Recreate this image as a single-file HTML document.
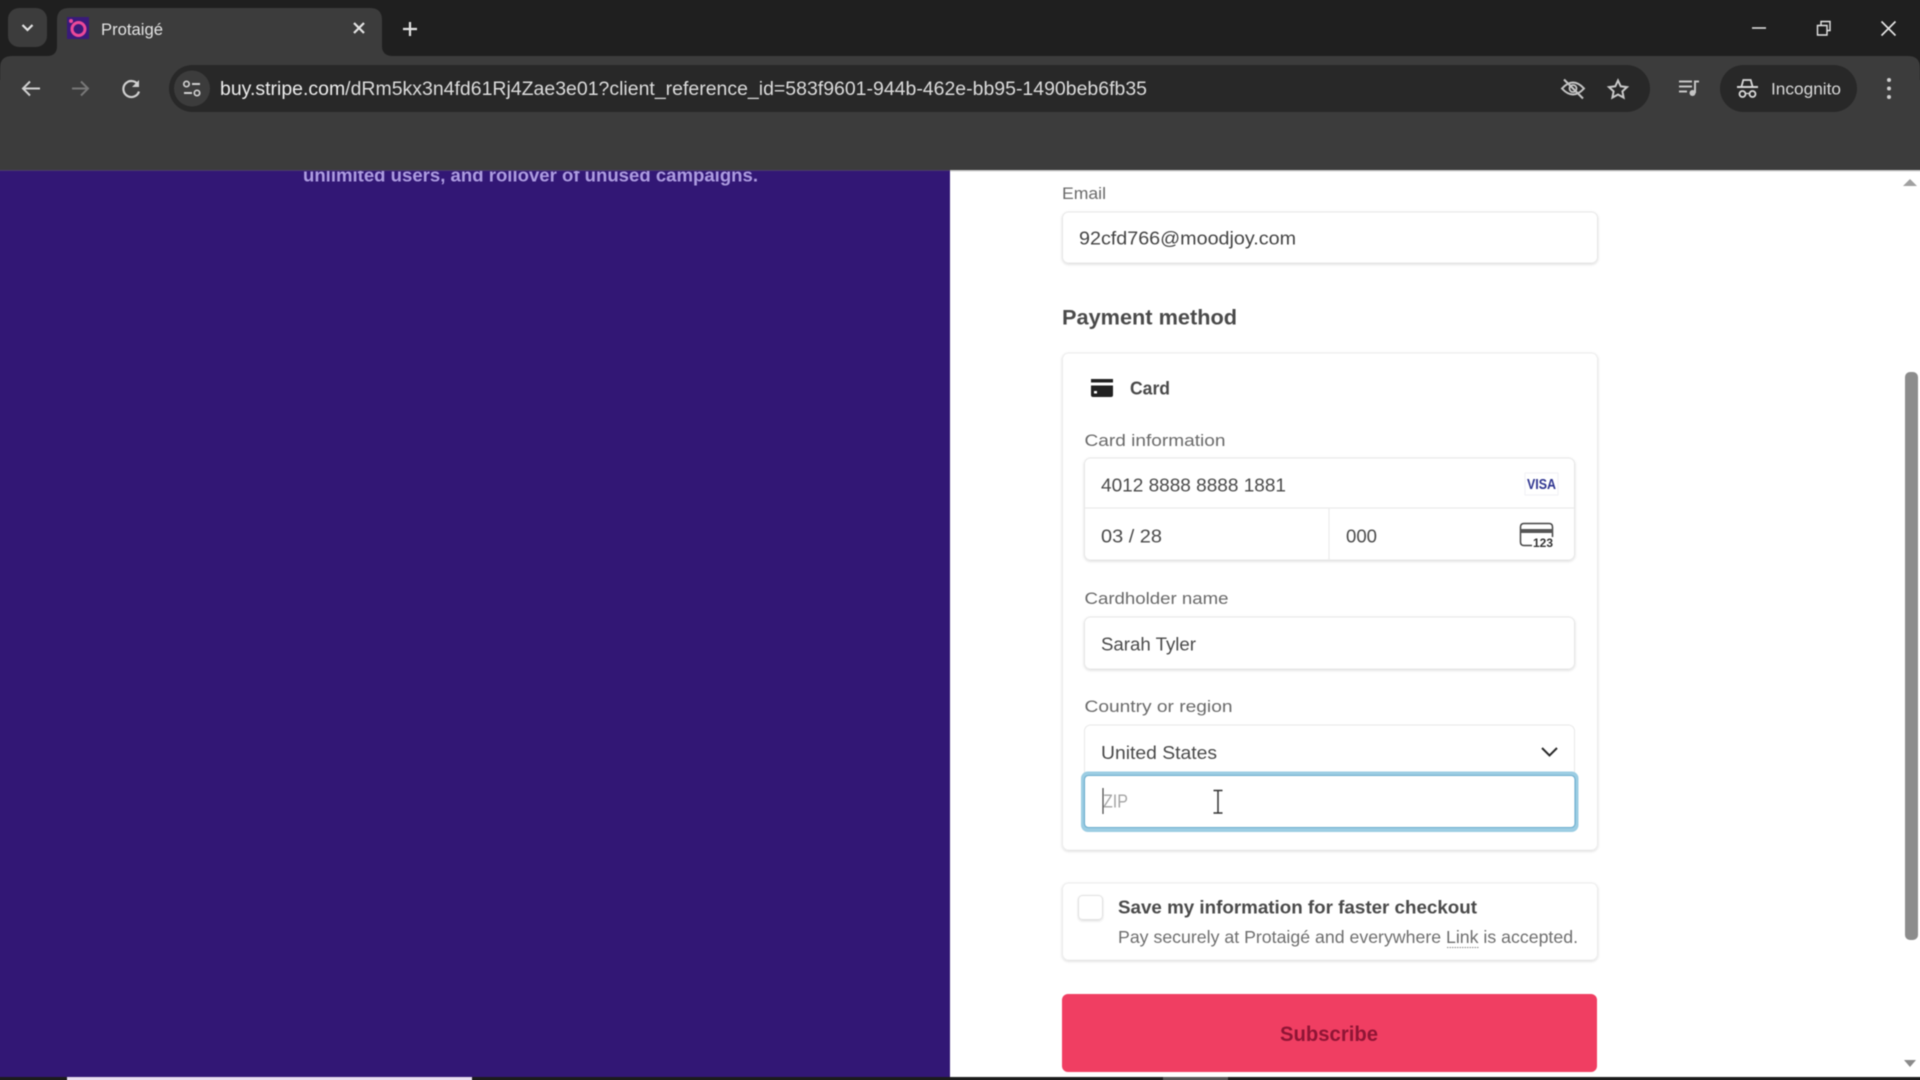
<!DOCTYPE html>
<html lang="en"><head><meta charset="utf-8"><title>Protaigé</title>
<style>
html,body{margin:0;padding:0;width:1920px;height:1080px;overflow:hidden;background:#1f1f1f}
#w{position:relative;width:1920px;height:1080px;overflow:hidden;contain:strict}
svg{display:block;position:absolute;left:-10px;top:-10px;filter:blur(.45px)}
text{font-family:"Liberation Sans",sans-serif}
</style></head><body><div id="w">
<svg width="1940" height="1100" viewBox="-10 -10 1940 1100" xmlns="http://www.w3.org/2000/svg">
<defs>
<clipPath id="pg"><rect x="0" y="170" width="1920" height="910"/></clipPath>
<filter id="sh" x="-5%" y="-20%" width="110%" height="140%"><feDropShadow dx="0" dy="1" stdDeviation="1.2" flood-color="#000" flood-opacity=".14"/></filter>
</defs>
<!-- page -->
<rect x="-10" y="-10" width="1940" height="1100" fill="#fff"/>
<rect x="-10" y="170" width="960" height="920" fill="#321775"/>
<g clip-path="url(#pg)"><text x="303" y="181.500" font-size="18.500" font-weight="700" fill="#ad9ce0" textLength="455" lengthAdjust="spacingAndGlyphs">unlimited users, and rollover of unused campaigns.</text></g>

<!-- browser chrome -->
<rect x="-10" y="-10" width="1940" height="90" fill="#1f1f1f"/>
<path d="M-10 170V80H0V68Q0 56 12 56H1908Q1920 56 1920 68V80H1930V170Z" fill="#3c3c3c"/>
<rect x="-10" y="170" width="960" height="1" fill="#4a3a6e"/>
<rect x="950" y="170" width="980" height="1.500" fill="#cfcfcf"/>
<path d="M47 56Q57 56 57 46V20Q57 8 69 8H370Q382 8 382 20V46Q382 56 393 56Z" fill="#3c3c3c"/>
<rect x="8" y="8" width="39" height="39" rx="11" fill="#3c3c3c"/>
<path d="M22.500 25l5 5 5-5" fill="none" stroke="#e3e3e3" stroke-width="2.200"/>
<rect x="67" y="17" width="22" height="22" fill="#3a1a7a"/>
<circle cx="78.500" cy="29" r="6.500" fill="none" stroke="#ec4899" stroke-width="3"/>
<circle cx="71" cy="21" r="2" fill="#ec4899"/>
<text x="101" y="35" font-size="16.500" fill="#e3e3e3" textLength="62" lengthAdjust="spacingAndGlyphs">Protaigé</text>
<path d="M354 23l10 10M364 23l-10 10" stroke="#e3e3e3" stroke-width="2.200"/>
<path d="M410 22v14M403 29h14" stroke="#e3e3e3" stroke-width="2.200"/>
<path d="M1752 28h14" stroke="#e6e6e6" stroke-width="1.500"/>
<path d="M1817.500 25.500h9.500v9.500h-9.500zM1821 25.500v-4h9v9h-3" fill="none" stroke="#e6e6e6" stroke-width="1.400"/>
<path d="M1881.500 21.500l14 14M1895.500 21.500l-14 14" stroke="#e6e6e6" stroke-width="1.600"/>

<!-- toolbar -->
<path d="M40 88.500H23M30 81.500l-7 7 7 7" fill="none" stroke="#cfcfcf" stroke-width="2"/>
<path d="M72 88.500H88M81 81.500l7 7-7 7" fill="none" stroke="#777" stroke-width="2"/>
<path d="M138 84.500A8 8 0 1 0 139 91.500" fill="none" stroke="#cfcfcf" stroke-width="2.200"/>
<path d="M139 80v7h-7z" fill="#cfcfcf"/>
<rect x="169" y="65" width="1481" height="47" rx="23.500" fill="#282828"/>
<circle cx="192" cy="88.500" r="18" fill="#3c3c3c"/>
<circle cx="186.500" cy="84" r="2.700" fill="none" stroke="#cfcfcf" stroke-width="1.700"/>
<path d="M192 84h8M184 93h8" stroke="#cfcfcf" stroke-width="1.900"/>
<circle cx="197" cy="93" r="2.700" fill="none" stroke="#cfcfcf" stroke-width="1.700"/>
<text x="220" y="95" font-size="19" fill="#dcdcdc" textLength="927" lengthAdjust="spacingAndGlyphs"><tspan fill="#eeeeee">buy.stripe.com</tspan>/dRm5kx3n4fd61Rj4Zae3e01?client_reference_id=583f9601-944b-462e-bb95-1490beb6fb35</text>
<path d="M1562 88.500Q1573 76.500 1584 88.500Q1573 100.500 1562 88.500Z" fill="none" stroke="#c4c4c4" stroke-width="2"/>
<circle cx="1573" cy="88.500" r="3.500" fill="none" stroke="#c4c4c4" stroke-width="1.800"/>
<path d="M1564 79.500l19 19" stroke="#c4c4c4" stroke-width="2"/>
<path d="M1618 80.500l2.700 5.800 6.300.8-4.600 4.300 1.200 6.200-5.600-3.100-5.600 3.100 1.200-6.200-4.600-4.300 6.300-.8z" fill="none" stroke="#c8c8c8" stroke-width="2"/>
<path d="M1679 81.500h13M1679 86.500h13M1679 91.500h8" stroke="#c4c4c4" stroke-width="2"/>
<path d="M1695 93V81.500h4" fill="none" stroke="#c4c4c4" stroke-width="2"/>
<circle cx="1692.500" cy="93" r="3" fill="#c4c4c4"/>
<rect x="1720" y="65" width="137" height="47" rx="23.500" fill="#282828"/>
<path d="M1741.500 86.500l1.800-6.500h7.400l1.800 6.500" fill="none" stroke="#d8d8d8" stroke-width="1.800"/>
<path d="M1737 87h21" stroke="#d8d8d8" stroke-width="2"/>
<circle cx="1742.500" cy="94" r="3" fill="none" stroke="#d8d8d8" stroke-width="1.800"/>
<circle cx="1752.500" cy="94" r="3" fill="none" stroke="#d8d8d8" stroke-width="1.800"/>
<path d="M1745.500 93.500h4" stroke="#d8d8d8" stroke-width="1.300"/>
<text x="1771" y="94.500" font-size="17" fill="#d8d8d8" textLength="70" lengthAdjust="spacingAndGlyphs">Incognito</text>
<circle cx="1889" cy="80" r="2" fill="#cfcfcf"/><circle cx="1889" cy="88.500" r="2" fill="#cfcfcf"/><circle cx="1889" cy="97" r="2" fill="#cfcfcf"/>

<!-- email -->
<text x="1062" y="199" font-size="17" fill="#6a6a6a" textLength="44" lengthAdjust="spacingAndGlyphs">Email</text>
<rect x="1062.500" y="212" width="535" height="51" rx="6" fill="#fff" stroke="#e8e8e8" filter="url(#sh)"/>
<text x="1079" y="244.500" font-size="18.500" fill="#444" textLength="217" lengthAdjust="spacingAndGlyphs">92cfd766@moodjoy.com</text>
<text x="1062" y="324.500" font-size="21" font-weight="700" fill="#4a4a4a" textLength="175" lengthAdjust="spacingAndGlyphs">Payment method</text>

<!-- payment panel -->
<rect x="1062.500" y="353" width="535" height="497" rx="6" fill="#fff" stroke="#ececec" filter="url(#sh)"/>
<rect x="1091" y="379" width="22" height="3.500" fill="#222"/>
<path d="M1091 385.500h22v9.500q0 2-2 2h-18q-2 0-2-2z" fill="#222"/>
<rect x="1094" y="391" width="3" height="2.500" fill="#fff"/>
<text x="1130" y="394.500" font-size="18" font-weight="700" fill="#4a4a4a" textLength="40" lengthAdjust="spacingAndGlyphs">Card</text>
<text x="1084.500" y="446" font-size="17" fill="#6a6a6a" textLength="141" lengthAdjust="spacingAndGlyphs">Card information</text>
<rect x="1084.500" y="458" width="490" height="102" rx="6" fill="#fff" stroke="#e8e8e8" filter="url(#sh)"/>
<path d="M1085 508h489M1329 508v52" stroke="#ececec" stroke-width="1.200"/>
<text x="1101" y="491.500" font-size="18" fill="#4a4a4a" textLength="185" lengthAdjust="spacingAndGlyphs">4012 8888 8888 1881</text>
<rect x="1525" y="473" width="33" height="22" fill="none" stroke="#f1f1f5" stroke-width="1"/>
<text x="1527" y="489" font-size="14.500" font-weight="700" fill="#2f3590" textLength="29" lengthAdjust="spacingAndGlyphs">VISA</text>
<text x="1101" y="542.500" font-size="18" fill="#4a4a4a" textLength="61" lengthAdjust="spacingAndGlyphs">03 / 28</text>
<text x="1346" y="542.500" font-size="18" fill="#4a4a4a" textLength="31" lengthAdjust="spacingAndGlyphs">000</text>
<path d="M1532 545.500h-8q-3.500 0-3.500-3.500V527q0-3.500 3.500-3.500h25q3.500 0 3.500 3.500v10" fill="none" stroke="#444" stroke-width="1.500"/>
<rect x="1520.500" y="529" width="32.500" height="4" fill="#555"/>
<text x="1533" y="547" font-size="12" font-weight="700" fill="#333" textLength="20" lengthAdjust="spacingAndGlyphs">123</text>

<text x="1084.500" y="604" font-size="17" fill="#6a6a6a" textLength="144" lengthAdjust="spacingAndGlyphs">Cardholder name</text>
<rect x="1084.500" y="617" width="490" height="52" rx="6" fill="#fff" stroke="#e8e8e8" filter="url(#sh)"/>
<text x="1101" y="650.500" font-size="18" fill="#4a4a4a" textLength="95" lengthAdjust="spacingAndGlyphs">Sarah Tyler</text>

<text x="1084.500" y="712" font-size="17" fill="#6a6a6a" textLength="148" lengthAdjust="spacingAndGlyphs">Country or region</text>
<rect x="1084.500" y="725" width="490" height="60" rx="6" fill="#fff" stroke="#e8e8e8"/>
<text x="1101" y="759" font-size="18" fill="#4a4a4a" textLength="116" lengthAdjust="spacingAndGlyphs">United States</text>
<path d="M1542 748l7.500 7.500 7.500-7.500" fill="none" stroke="#2a2a2a" stroke-width="2"/>
<rect x="1081" y="771.500" width="497.500" height="60.500" rx="7" fill="#9ccde3"/>
<rect x="1084.500" y="775.500" width="490.500" height="52" rx="4" fill="#fff" stroke="#6aaccd" stroke-width="1.100"/>
<path d="M1103 788v26" stroke="#444" stroke-width="1.200"/>
<text x="1103" y="807.500" font-size="18" fill="#a4a4a4" textLength="25" lengthAdjust="spacingAndGlyphs">ZIP</text>
<path d="M1213.500 790.500h9M1218 790.500v22.500M1213.500 813h9" fill="none" stroke="#333" stroke-width="1.500"/>

<!-- save -->
<rect x="1062.500" y="883" width="535" height="77" rx="6" fill="#fff" stroke="#ececec" filter="url(#sh)"/>
<rect x="1078.500" y="895.500" width="24" height="24" rx="4" fill="#fff" stroke="#e2e2e2" filter="url(#sh)"/>
<text x="1118" y="913.500" font-size="18.500" font-weight="700" fill="#4a4a4a" textLength="359" lengthAdjust="spacingAndGlyphs">Save my information for faster checkout</text>
<text x="1118" y="943" font-size="17.500" fill="#6e6e6e" textLength="460" lengthAdjust="spacingAndGlyphs">Pay securely at Protaigé and everywhere Link is accepted.</text>
<path d="M1447 947.500h32" stroke="#8a8a8a" stroke-width="1" stroke-dasharray="1.500 1"/>

<!-- subscribe -->
<rect x="1062" y="994" width="535" height="78" rx="6" fill="#f03e62"/>
<text x="1280" y="1041" font-size="21" font-weight="700" fill="#8f1535" textLength="98" lengthAdjust="spacingAndGlyphs">Subscribe</text>

<!-- scrollbar -->
<path d="M1910 179l7 7h-14z" fill="#a0a0a0"/>
<rect x="1905" y="372" width="13" height="568" rx="5" fill="#8c8c8c"/>
<path d="M1910 1067l6-7h-12z" fill="#8a8a8a"/>

<!-- bottom strip -->
<rect x="-10" y="1077" width="1940" height="13" fill="#1c1c1c"/>
<rect x="67" y="1077" width="405" height="13" fill="#e8dff0"/>
<rect x="1163" y="1077" width="65" height="13" fill="#555"/>
</svg>
</div></body></html>
